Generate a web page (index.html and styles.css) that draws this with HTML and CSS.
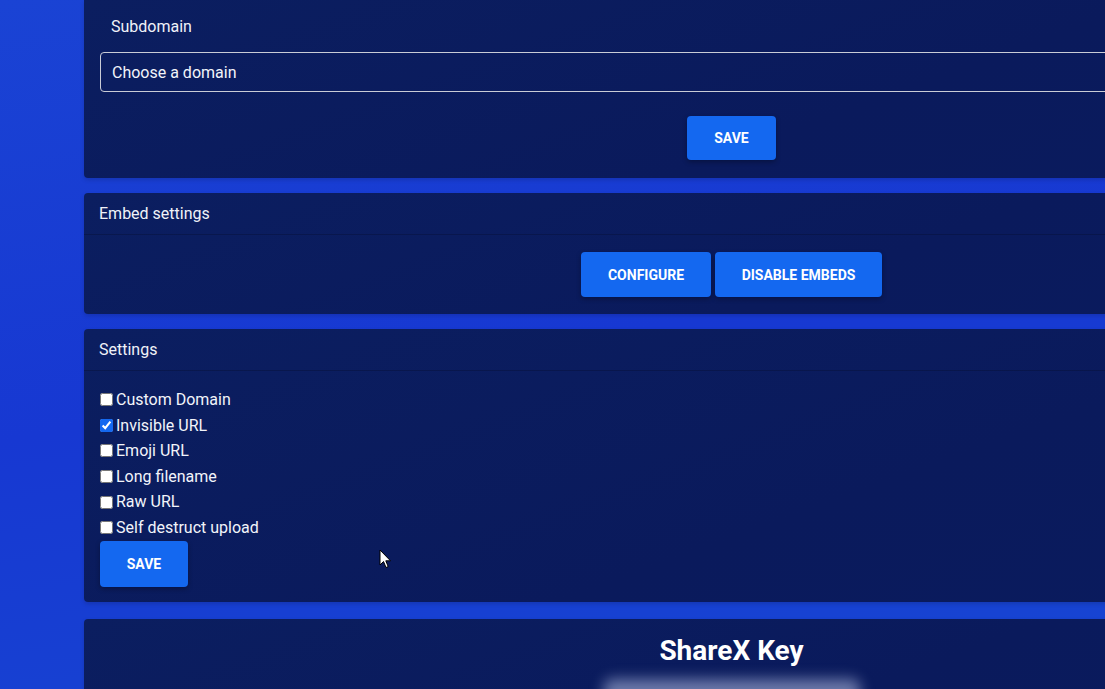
FILE: index.html
```html
<!DOCTYPE html>
<html>
<head>
<meta charset="utf-8">
<link rel="stylesheet" href="styles.css">
</head>
<body>
<div class="page">
  <section class="card card-sub">
    <label class="float-label">Subdomain</label>
    <div class="select">Choose a domain</div>
    <div class="center-row">
      <button class="btn btn-save1">SAVE</button>
    </div>
  </section>

  <section class="card card-embed">
    <header class="card-head">Embed settings</header>
    <div class="card-body center-row gap4">
      <button class="btn btn-cfg">CONFIGURE</button>
      <button class="btn btn-dis">DISABLE EMBEDS</button>
    </div>
  </section>

  <section class="card card-settings">
    <header class="card-head">Settings</header>
    <div class="card-body settings-body">
      <div class="checks">
        <label class="check"><input type="checkbox">Custom Domain</label>
        <label class="check"><input type="checkbox" checked>Invisible URL</label>
        <label class="check"><input type="checkbox">Emoji URL</label>
        <label class="check"><input type="checkbox">Long filename</label>
        <label class="check"><input type="checkbox">Raw URL</label>
        <label class="check"><input type="checkbox">Self destruct upload</label>
      </div>
      <button class="btn btn-save2">SAVE</button>
    </div>
  </section>

  <section class="card card-key">
    <h2 class="key-title">ShareX Key</h2>
    <div class="key-blur"></div>
  </section>
</div>
<svg class="cursor" width="13" height="20" viewBox="0 0 13 20"><path d="M1 1 L1 16 L4.5 12.5 L7 18.5 L9.2 17.6 L6.8 11.8 L11.5 11.8 Z" fill="#fff" stroke="#000" stroke-width="1"/></svg>
</body>
</html>
```

FILE: styles.css
```css
* { box-sizing: border-box; }
html, body {
  margin: 0;
  height: 100%;
  overflow: hidden;
}
body {
  font-family: Roboto, "Liberation Sans", sans-serif;
  background: linear-gradient(170deg, #1a43d4 0%, #1738d2 50%, #1746d2 100%);
  color: #fff;
  position: relative;
}
.page {
  padding-left: 84px;
  display: flex;
  flex-direction: column;
  gap: 15px;
  width: 1379px;
}
.card {
  width: 1295px;
  background: linear-gradient(160deg, #0b1e60 0%, #0a1a5c 60%, #0a1b5e 100%);
  border-radius: 4px;
  box-shadow: 0 2px 4px rgba(0,0,0,0.15);
}
.card-sub {
  border-radius: 0 0 4px 4px;
  padding: 17px 16px 18px;
  display: flex;
  flex-direction: column;
}
.float-label {
  font-size: 16px;
  line-height: 20px;
  padding-left: 11px;
  color: #f0f2f8;
}
.select {
  margin-top: 15px;
  height: 40px;
  border: 1px solid #c9ccd6;
  border-radius: 4px;
  padding: 0 11px;
  display: flex;
  align-items: center;
  font-size: 16px;
  color: #f2f4fa;
}
.center-row {
  display: flex;
  justify-content: center;
}
.card-sub .center-row { margin-top: 24px; }
.gap4 { gap: 4px; }
.btn {
  font-family: Roboto, "Liberation Sans", sans-serif;
  font-weight: 700;
  font-size: 14px;
  color: #fff;
  background: #1468f0;
  border: none;
  border-radius: 4px;
  box-shadow: 0 2px 5px rgba(0,0,0,0.3);
  height: 45px;
  padding: 0;
  cursor: pointer;
}
.btn-save1 { width: 89px; height: 44px; }
.btn-cfg { width: 130px; }
.btn-dis { width: 167px; }
.btn-save2 { width: 88px; height: 46px; }
.card-head {
  padding: 0 15px;
  height: 42px;
  display: flex;
  align-items: center;
  font-size: 16px;
  color: #f0f2f8;
  border-bottom: 1px solid rgba(0,0,0,0.18);
}
.card-body {
  padding: 17px 16px 16px;
}
.card-embed .card-body { padding-bottom: 17px; }
.settings-body {
  padding: 16px 16px 15px;
  display: flex;
  flex-direction: column;
  align-items: flex-start;
}
.card-settings { margin-bottom: 2px; }
.checks {
  display: flex;
  flex-direction: column;
}
.check {
  display: flex;
  align-items: center;
  font-size: 16px;
  line-height: 25.6px;
  height: 25.6px;
  color: #f2f4fa;
}
.check input {
  margin: 0 3px 0 0;
  width: 13px;
  height: 13px;
  accent-color: #1468f0;
}
.card-key {
  height: 120px;
  border-radius: 4px 4px 0 0;
  display: flex;
  flex-direction: column;
  align-items: center;
  padding-top: 14px;
}
.key-title {
  margin: 0;
  font-size: 28px;
  font-weight: 700;
  line-height: 36px;
}
.key-blur {
  margin-top: 10px;
  width: 256px;
  height: 40px;
  background: rgba(205, 215, 245, 0.5);
  border-radius: 8px;
  filter: blur(7px);
}
.cursor {
  position: absolute;
  left: 379px;
  top: 549px;
}
```
